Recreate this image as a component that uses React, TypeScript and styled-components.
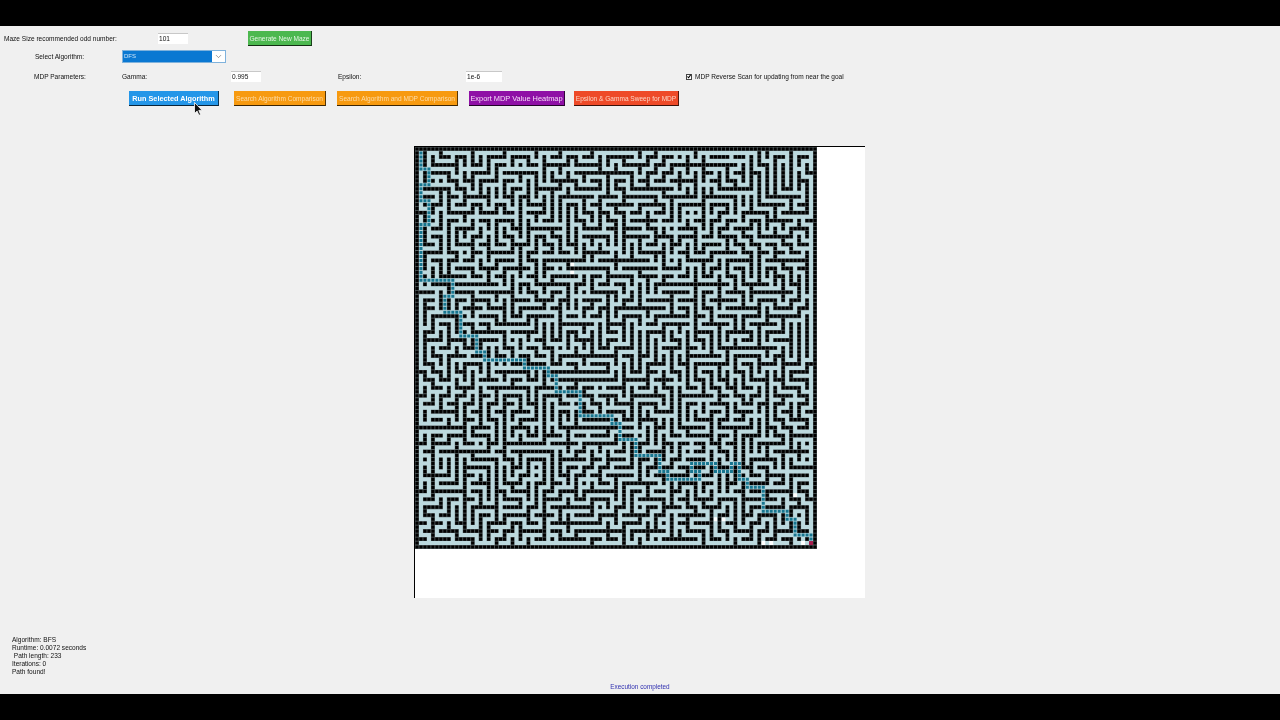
import React, { useMemo } from 'react'
import styled, { createGlobalStyle } from 'styled-components'
import { ChevronDown } from 'lucide-react'

const GlobalStyle = createGlobalStyle`
    html, body {
        margin: 0;
        padding: 0;
        height: 100%;
        overflow: hidden;
        background: #000;
        font-family: "Liberation Sans", Arial, sans-serif;
    }
`

const Page = styled.div`
    display: flex;
    flex-direction: column;
    height: 720px;
    background: #000;
`

const LetterBar = styled.div`
    height: 26px;
    flex: none;
    background: #000;
`

// the source is a video frame, so everything is slightly soft
const Window = styled.main`
    flex: 1;
    display: flex;
    flex-direction: column;
    background: #f0f0f0;
    color: #111;
    font-size: 6.55px;
    min-height: 0;
    filter: blur(0.3px);
`

const Controls = styled.section`
    display: flex;
    flex-direction: column;
    padding-top: 5px;
`

const Row = styled.div<{ $cols: string; $left: number; $top?: number; $height: number }>`
    display: grid;
    grid-template-columns: ${(p) => p.$cols};
    align-items: center;
    height: ${(p) => p.$height}px;
    padding-left: ${(p) => p.$left}px;
    margin-top: ${(p) => p.$top ?? 0}px;
`

const Label = styled.span`
    white-space: nowrap;
    line-height: 10px;
`

const TextField = styled.input<{ $width: number }>`
    box-sizing: border-box;
    width: ${(p) => p.$width}px;
    height: 11px;
    padding: 0 0 1px 1px;
    border: 0;
    border-top: 1px solid #c8c8c8;
    background: #fff;
    color: #111;
    font: 6.55px "Liberation Sans", Arial, sans-serif;
    outline: none;
`

const Select = styled.div`
    box-sizing: border-box;
    display: flex;
    align-items: stretch;
    width: 104px;
    height: 13px;
    border: 1px solid #7fb2dc;
    background: #fff;
`

const SelectValue = styled.div`
    flex: 1;
    background: #0a78d2;
    color: #cfe6f8;
    font-size: 6px;
    line-height: 11px;
    padding-left: 1px;
`

const SelectArrow = styled.div`
    width: 13px;
    display: flex;
    align-items: center;
    justify-content: center;
    color: #555;
`

const CheckLabel = styled.label`
    display: flex;
    align-items: center;
    gap: 3px;
    white-space: nowrap;
`

const CheckBox = styled.span`
    box-sizing: border-box;
    display: flex;
    align-items: center;
    justify-content: center;
    width: 6px;
    height: 6px;
    border: 1px solid #444;
    background: #fff;
`

const ActionButton = styled.button<{ $bg: string; $width: number; $fg?: string; $size?: number; $bold?: boolean }>`
    position: relative;
    box-sizing: border-box;
    width: ${(p) => p.$width}px;
    height: 15px;
    padding: 0;
    border: 0;
    border-right: 1px solid rgba(0, 0, 0, 0.65);
    border-bottom: 1px solid rgba(0, 0, 0, 0.75);
    background: ${(p) => p.$bg};
    color: ${(p) => p.$fg ?? '#fff'};
    font-family: "Liberation Sans", Arial, sans-serif;
    font-size: ${(p) => p.$size ?? 6.55}px;
    font-weight: ${(p) => (p.$bold ? 700 : 400)};
    white-space: nowrap;
    text-align: center;
    overflow: visible;
`

const Pointer = styled.svg`
    position: absolute;
    left: 65px;
    top: 11px;
    width: 9px;
    height: 14px;
`

const CanvasArea = styled.div`
    display: flex;
    justify-content: center;
    margin-top: 40px;
`

const Canvas = styled.div`
    box-sizing: border-box;
    width: 450px;
    height: 452px;
    border-top: 1px solid #000;
    box-shadow: -1px 0 0 #000;
    background: #fff;
`

const MazeImage = styled.svg`
    display: block;
    width: 402px;
    height: 402px;
`

const Status = styled.div`
    margin-top: 38px;
    padding-left: 12px;
    line-height: 8px;
    white-space: pre;
`

const Footer = styled.div`
    margin-top: 6px;
    text-align: center;
    color: #3030b0;
    font-size: 6.4px;
    line-height: 10px;
`

const SIZE = 101

// path corners read off the screenshot, in page pixels
const ROUTE: [number, number][] = [
    [421, 150], [421, 170], [429, 170], [429, 186], [421, 186], [421, 202], [429, 202],
    [429, 226], [421, 226], [421, 278], [453, 278], [453, 294], [445, 294], [445, 314],
    [461, 314], [461, 334], [477, 334], [477, 346], [485, 346], [485, 358], [525, 358],
    [525, 366], [549, 366], [549, 374], [557, 374], [557, 390], [577, 390], [577, 414],
    [609, 414], [609, 422], [621, 422], [621, 438], [635, 438], [635, 456], [661, 456],
    [661, 466], [669, 466], [669, 480], [701, 480], [701, 472], [693, 472], [693, 464],
    [713, 464], [713, 472], [733, 472], [733, 464], [741, 464], [741, 478], [749, 478],
    [749, 488], [765, 488], [765, 510], [789, 510], [789, 520], [797, 520], [797, 534],
    [811, 534], [811, 542],
]

// a few cells the search never reached
const UNVISITED: [number, number][] = [
    [95, 87], [87, 99], [89, 99], [75, 93], [77, 93], [38, 29], [39, 29], [39, 31], [97, 99],
]

const toCell = (px: number, origin: number) => {
    const c = Math.floor((px - origin) / 3.98)
    return Math.max(1, Math.min(SIZE - 2, c % 2 === 0 ? c + 1 : c))
}

const buildMaze = () => {
    let seed = 20240611
    const rand = () => {
        seed = (seed * 1664525 + 1013904223) >>> 0
        return seed / 4294967296
    }
    const open = Array.from({ length: SIZE }, () => new Array<boolean>(SIZE).fill(false))
    const dirs = [[2, 0], [-2, 0], [0, 2], [0, -2]]
    const stack: [number, number][] = [[1, 1]]
    open[1][1] = true
    while (stack.length) {
        const [x, y] = stack[stack.length - 1]
        const next = dirs.filter(([dx, dy]) => {
            const nx = x + dx
            const ny = y + dy
            return nx > 0 && ny > 0 && nx < SIZE - 1 && ny < SIZE - 1 && !open[ny][nx]
        })
        if (!next.length) {
            stack.pop()
            continue
        }
        const [dx, dy] = next[Math.floor(rand() * next.length)]
        open[y + dy / 2][x + dx / 2] = true
        open[y + dy][x + dx] = true
        stack.push([x + dx, y + dy])
    }
    // knock some extra holes so it has loops like the original
    for (let y = 1; y < SIZE - 1; y++) {
        for (let x = 1; x < SIZE - 1; x++) {
            if ((x + y) % 2 === 1 && !open[y][x] && rand() < 0.05) open[y][x] = true
        }
    }
    const path: [number, number][] = []
    let cx = toCell(ROUTE[0][0], 415)
    let cy = toCell(ROUTE[0][1], 147)
    path.push([cx, cy])
    ROUTE.slice(1).forEach(([px, py]) => {
        const tx = toCell(px, 415)
        const ty = toCell(py, 147)
        while (cx !== tx || cy !== ty) {
            if (cx !== tx) cx += Math.sign(tx - cx)
            else cy += Math.sign(ty - cy)
            path.push([cx, cy])
        }
    })
    path.forEach(([x, y]) => {
        open[y][x] = true
    })
    let grid = ''
    let walls = ''
    for (let y = 0; y < SIZE; y++) {
        for (let x = 0; x < SIZE; x++) {
            if (open[y][x]) continue
            grid += `M${x} ${y}h1v1h-1z`
            walls += `M${x + 0.1} ${y + 0.1}h.8v.8h-.8z`
        }
    }
    const white = UNVISITED.filter(([x, y]) => open[y][x])
        .map(([x, y]) => `M${x} ${y}h1v1h-1z`)
        .join('')
    const route = path.map(([x, y]) => `M${x + 0.12} ${y + 0.12}h.76v.76h-.76z`).join('')
    return { grid, walls, white, route, end: path[path.length - 1] }
}

const Maze = () => {
    const maze = useMemo(buildMaze, [])
    return (
        <MazeImage viewBox={`0 0 ${SIZE} ${SIZE}`}>
            <rect width={SIZE} height={SIZE} fill="#bcd9de" />
            <path d={maze.white} fill="#fff" />
            <path d={maze.grid} fill="#555f61" />
            <path d={maze.walls} fill="#000" />
            <path d={maze.route} fill="#17758f" />
            <rect x={maze.end[0]} y={maze.end[1]} width={1} height={1} fill="#a81e4e" />
        </MazeImage>
    )
}

const App: React.FC = () => {
    return (
        <Page>
            <GlobalStyle />
            <LetterBar />
            <Window>
                <Controls>
                    <Row $cols="154px 90px auto" $left={4} $height={15}>
                        <Label>Maze Size recommended odd number:</Label>
                        <TextField $width={30} value="101" readOnly />
                        <ActionButton $bg="#4cb84f" $width={64} $fg="#e4f6e4">
                            Generate New Maze
                        </ActionButton>
                    </Row>
                    <Row $cols="87px auto" $left={35} $top={4} $height={13}>
                        <Label>Select Algorithm:</Label>
                        <Select>
                            <SelectValue>DFS</SelectValue>
                            <SelectArrow>
                                <ChevronDown size={9} strokeWidth={1.5} />
                            </SelectArrow>
                        </Select>
                    </Row>
                    <Row $cols="88px 109px 107px 128px 220px 1fr" $left={34} $top={8} $height={11}>
                        <Label>MDP Parameters:</Label>
                        <Label>Gamma:</Label>
                        <TextField $width={30} value="0.995" readOnly />
                        <Label>Epsilon:</Label>
                        <TextField $width={36} value="1e-6" readOnly />
                        <CheckLabel>
                            <CheckBox>
                                <svg width="5" height="5" viewBox="0 0 10 10">
                                    <path d="M1 5l3 3 5-7" fill="none" stroke="#000" strokeWidth="2.6" />
                                </svg>
                            </CheckBox>
                            MDP Reverse Scan for updating from near the goal
                        </CheckLabel>
                    </Row>
                    <Row $cols="105px 103px 132px 105px 1fr" $left={129} $top={9} $height={15}>
                        <ActionButton $bg="#2496e8" $width={90} $size={7.3} $bold>
                            Run Selected Algorithm
                            <Pointer viewBox="0 0 9 14">
                                <path
                                    d="M.5.5v11l2.6-2.4 1.8 4.2 1.7-.8-1.8-4.1h3.4z"
                                    fill="#111"
                                    stroke="#fff"
                                    strokeWidth=".8"
                                />
                            </Pointer>
                        </ActionButton>
                        <ActionButton $bg="#f79a10" $width={92} $fg="#fddca8">
                            Search Algorithm Comparison
                        </ActionButton>
                        <ActionButton $bg="#f79a10" $width={121} $fg="#fddca8">
                            Search Algorithm and MDP Comparison
                        </ActionButton>
                        <ActionButton $bg="#8f10a6" $width={96} $size={7.4} $fg="#f5dcf8">
                            Export MDP Value Heatmap
                        </ActionButton>
                        <ActionButton $bg="#ee4a28" $width={105} $fg="#fcd4c4">
                            Epsilon &amp; Gamma Sweep for MDP
                        </ActionButton>
                    </Row>
                </Controls>
                <CanvasArea>
                    <Canvas>
                        <Maze />
                    </Canvas>
                </CanvasArea>
                <Status>
                    {'Algorithm: BFS\nRuntime: 0.0072 seconds\n Path length: 233\nIterations: 0\nPath found!'}
                </Status>
                <Footer>Execution completed</Footer>
            </Window>
            <LetterBar />
        </Page>
    )
}

export default App
